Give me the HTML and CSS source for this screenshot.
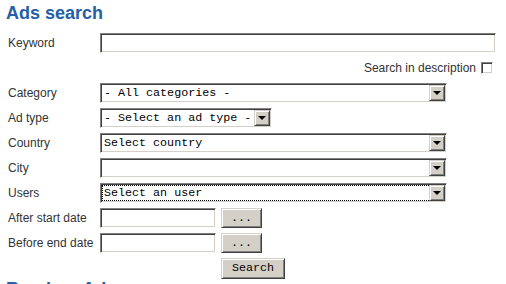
FILE: index.html
```html
<!DOCTYPE html>
<html lang="en">
<head>
  <meta charset="UTF-8" />
  <title>Ads search</title>
  <meta name="viewport" content="width=device-width, initial-scale=1.0" />
  <link rel="stylesheet" href="styles.css">
</head>
<body>
  <div class="page">
    <h1 class="section-title">Ads search</h1>

    <form class="search-form" onsubmit="return false;">
      <label class="field-label" for="keyword">Keyword</label>
      <input class="field text-field wide" type="text" id="keyword" />

      <div class="desc-row">
        <label for="in-desc">Search in description</label>
        <input class="check" type="checkbox" id="in-desc" />
      </div>

      <label class="field-label" for="category">Category</label>
      <div class="select-wrap long">
        <select class="field select-field" id="category">
          <option>- All categories -</option>
        </select>
        <span class="arrow"></span>
      </div>

      <label class="field-label" for="adtype">Ad type</label>
      <div class="select-wrap short">
        <select class="field select-field" id="adtype">
          <option>- Select an ad type -</option>
        </select>
        <span class="arrow"></span>
      </div>

      <label class="field-label" for="country">Country</label>
      <div class="select-wrap long">
        <select class="field select-field" id="country">
          <option>Select country</option>
        </select>
        <span class="arrow"></span>
      </div>

      <label class="field-label" for="city">City</label>
      <div class="select-wrap long">
        <select class="field select-field" id="city">
          <option></option>
        </select>
        <span class="arrow"></span>
      </div>

      <label class="field-label" for="users">Users</label>
      <div class="select-wrap long focused">
        <select class="field select-field" id="users">
          <option>Select an user</option>
        </select>
        <span class="arrow"></span>
      </div>

      <label class="field-label" for="start">After start date</label>
      <div class="date-row">
        <input class="field text-field date" type="text" id="start" />
        <button class="btn pick" type="button">...</button>
      </div>

      <label class="field-label" for="end">Before end date</label>
      <div class="date-row">
        <input class="field text-field date" type="text" id="end" />
        <button class="btn pick" type="button">...</button>
      </div>

      <div class="submit-row">
        <button class="btn submit" type="submit">Search</button>
      </div>
    </form>

    <h2 class="section-title">Random Ads</h2>
  </div>
</body>
</html>
```

FILE: styles.css
```css
* {
  box-sizing: border-box;
}

html, body {
  margin: 0;
  overflow: hidden;
}

body {
  font-family: "Liberation Sans", Arial, sans-serif;
  font-size: 12px;
  color: #333;
  background: #fff;
}

.page {
  padding: 0 6px;
}

.section-title {
  margin: 2px 0 9px;
  font-size: 18px;
  line-height: 22px;
  font-weight: bold;
  color: #2460a7;
}

h2.section-title {
  margin-top: 0;
}

.search-form {
  display: grid;
  grid-template-columns: 94px auto;
  grid-auto-rows: 20px;
  row-gap: 5px;
  align-items: center;
}

.field-label {
  padding-left: 2px;
  white-space: nowrap;
}

.field {
  height: 20px;
  margin: 0;
  border: 1px solid;
  border-color: #808080 #fff #fff #808080;
  box-shadow: inset 1px 1px #404040, inset -1px -1px #d4d0c8;
  background: #fff;
  font-family: "Liberation Mono", "Courier New", monospace;
  font-size: 11.7px;
  color: #000;
  outline: none;
}

.text-field {
  padding: 0 3px;
}

.wide {
  width: 396px;
}

.desc-row {
  grid-column: 2;
  width: 396px;
  height: 19px;
  display: flex;
  justify-content: flex-end;
  align-items: center;
  gap: 5px;
  padding-right: 3px;
}

.check {
  appearance: none;
  width: 12px;
  height: 12px;
  margin: 0;
  border: 1px solid;
  border-color: #808080 #fff #fff #808080;
  box-shadow: inset 1px 1px #404040, inset -1px -1px #d4d0c8;
  background: #fff;
}

.select-wrap {
  position: relative;
  height: 20px;
}

.select-wrap.long {
  width: 347px;
}

.select-wrap.short {
  width: 172px;
}

.select-field {
  appearance: none;
  width: 100%;
  padding: 0 20px 0 3px;
  border-radius: 0;
}

.focused .select-field {
  outline: 1px dotted #000;
  outline-offset: -3px;
}

.arrow {
  position: absolute;
  top: 2px;
  right: 2px;
  width: 16px;
  height: 16px;
  background: #d4d0c8;
  border: 1px solid;
  border-color: #d4d0c8 #404040 #404040 #d4d0c8;
  box-shadow: inset 1px 1px #fff, inset -1px -1px #808080;
  pointer-events: none;
}

.arrow::after {
  content: "";
  position: absolute;
  left: 3px;
  top: 5px;
  border-left: 4px solid transparent;
  border-right: 4px solid transparent;
  border-top: 4px solid #000;
}

.date-row {
  display: flex;
  gap: 5px;
}

.date {
  width: 116px;
}

.btn {
  height: 20px;
  margin: 0;
  padding: 0;
  background: #d4d0c8;
  border: 1px solid;
  border-color: #d4d0c8 #404040 #404040 #d4d0c8;
  box-shadow: inset 1px 1px #fff, inset -1px -1px #808080;
  font-family: "Liberation Mono", "Courier New", monospace;
  font-size: 11.7px;
  color: #000;
}

.pick {
  width: 41px;
}

.submit-row {
  grid-column: 2;
  padding-left: 121px;
}

.submit {
  width: 64px;
  height: 21px;
}
```
